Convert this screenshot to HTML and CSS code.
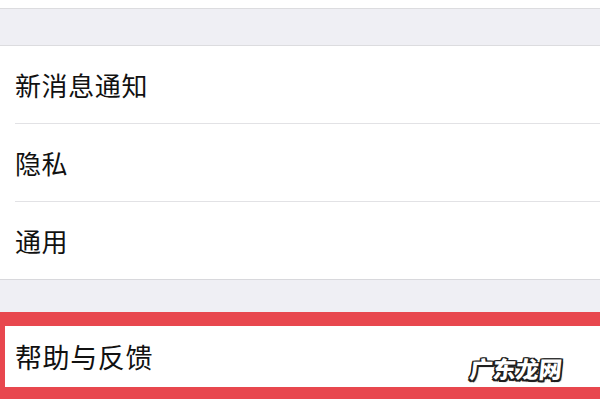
FILE: index.html
```html
<!DOCTYPE html>
<html lang="zh-CN">
<head>
<meta charset="utf-8">
<link rel="stylesheet" href="styles.css">
</head>
<body>
<div class="page">
  <div class="top"></div>
  <div class="gap gap-first"></div>
  <div class="group">
    <div class="row"><span class="label">新消息通知</span></div>
    <div class="row"><span class="label">隐私</span></div>
    <div class="row"><span class="label">通用</span></div>
  </div>
  <div class="gap gap-second"></div>
  <div class="frame">
    <div class="row row-help"><span class="label">帮助与反馈</span></div>
    <span class="watermark">广东龙网</span>
  </div>
</div>
</body>
</html>
```
FILE: styles.css
```css
html, body {
  margin: 0;
  padding: 0;
  background: #ffffff;
}
.page {
  width: 600px;
  height: 400px;
  overflow: hidden;
  display: flex;
  flex-direction: column;
  font-family: "Noto Sans CJK SC", "Noto Sans", sans-serif;
  color: #111111;
}
.top {
  height: 8px;
  background: #ffffff;
  border-bottom: 1px solid #dcdcdf;
  flex: none;
}
.gap {
  background: #efeff4;
  flex: none;
}
.gap-first {
  height: 36px;
  border-bottom: 1px solid #dcdcdf;
}
.gap-second {
  height: 32px;
}
.group {
  background: #ffffff;
  border-bottom: 1px solid #d8d8dc;
  flex: none;
}
.row {
  height: 77px;
  display: flex;
  align-items: center;
  padding-left: 15px;
  position: relative;
}
.row + .row::before {
  content: "";
  position: absolute;
  left: 15px;
  right: 0;
  top: -1px;
  height: 1px;
  background: #e2e2e5;
}
.row + .row {
  margin-top: 1px;
}
.label {
  font-size: 26px;
  line-height: 1;
  font-weight: 400;
  letter-spacing: 0.6px;
}
.frame {
  position: relative;
  flex: none;
  border-top: 14px solid #e8474e;
  border-left: 5px solid #e8474e;
  border-bottom: 12px solid #e8474e;
  background: #ffffff;
}
.row-help {
  height: 61px;
  padding-left: 10px;
}
.row-help .label {
  font-size: 27px;
}
.watermark {
  position: absolute;
  right: 38px;
  top: 31px;
  font-size: 23px;
  line-height: 1;
  font-weight: 900;
  color: #ffffff;
  letter-spacing: 0px;
  text-shadow:
    1.5px 0 0 #1e1e1e, -1.5px 0 0 #1e1e1e, 0 1.5px 0 #1e1e1e, 0 -1.5px 0 #1e1e1e,
    1.5px 1.5px 0 #1e1e1e, -1.5px -1.5px 0 #1e1e1e, 1.5px -1.5px 0 #1e1e1e, -1.5px 1.5px 0 #1e1e1e,
    2px 2px 1px #555555;
  transform: skewX(-6deg);
}
```
